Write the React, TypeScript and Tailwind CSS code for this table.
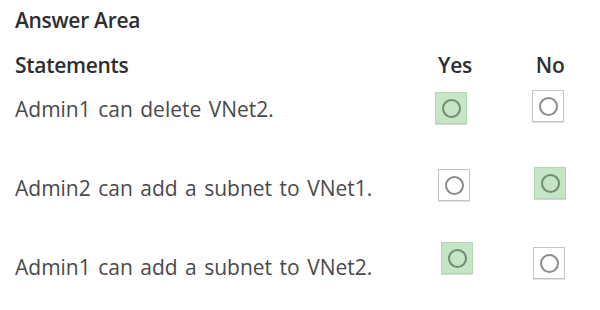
const font = { fontFamily: '"Open Sans", "Noto Sans", sans-serif' };

function Choice({ selected, className }: { selected: boolean; className?: string }) {
  return (
    <div
      className={
        "flex h-[32px] w-[32px] shrink-0 items-center justify-center border " +
        (selected
          ? "border-[#b5d6b5] bg-[#c6e4c6] shadow-[0_1px_0_#d6d6d6]"
          : "border-[#c4c4c4] bg-white shadow-[0_1px_0_#e2e2e2]") +
        " " +
        (className ?? "")
      }
    >
      <div
        className={
          "h-[19px] w-[19px] rounded-full border-2 " +
          (selected ? "border-[#6e8d6e]" : "border-[#8c8c8c]")
        }
      />
    </div>
  );
}

const rows = [
  { text: "Admin1 can delete VNet2.", yes: true, yc: "mt-[16px]", nc: "ml-[65px] mt-[14px]" },
  { text: "Admin2 can add a subnet to VNet1.", yes: false, yc: "ml-[3px] mt-[14px]", nc: "ml-[64px] mt-[12px]" },
  { text: "Admin1 can add a subnet to VNet2.", yes: true, yc: "ml-[6px] mt-[8px]", nc: "ml-[60px] mt-[13px]" },
];

export default function App() {
  return (
    <div className="h-[310px] w-[600px] overflow-hidden bg-white pl-[15px]" style={font}>
      <h2 className="pt-[6px] text-[21px] font-semibold leading-[28px] tracking-[-0.3px] text-[#2e2e2e]">
        Answer Area
      </h2>
      <div className="mt-[18px] flex h-[24px] text-[21px] font-semibold leading-[26px] tracking-[-0.3px] text-[#2e2e2e]">
        <div className="w-[420px]">Statements</div>
        <div className="ml-[3px]">Yes</div>
        <div className="ml-[64px]">No</div>
      </div>
      {rows.map((r, i) => (
        <div key={i} className="flex h-[79px] items-start">
          <div className="w-[420px] shrink-0 pt-[19px] text-[21px] leading-[28px] text-[#4a4a4a] [word-spacing:2px]">
            {r.text}
          </div>
          <Choice selected={r.yes} className={r.yc} />
          <Choice selected={!r.yes} className={r.nc} />
        </div>
      ))}
    </div>
  );
}
